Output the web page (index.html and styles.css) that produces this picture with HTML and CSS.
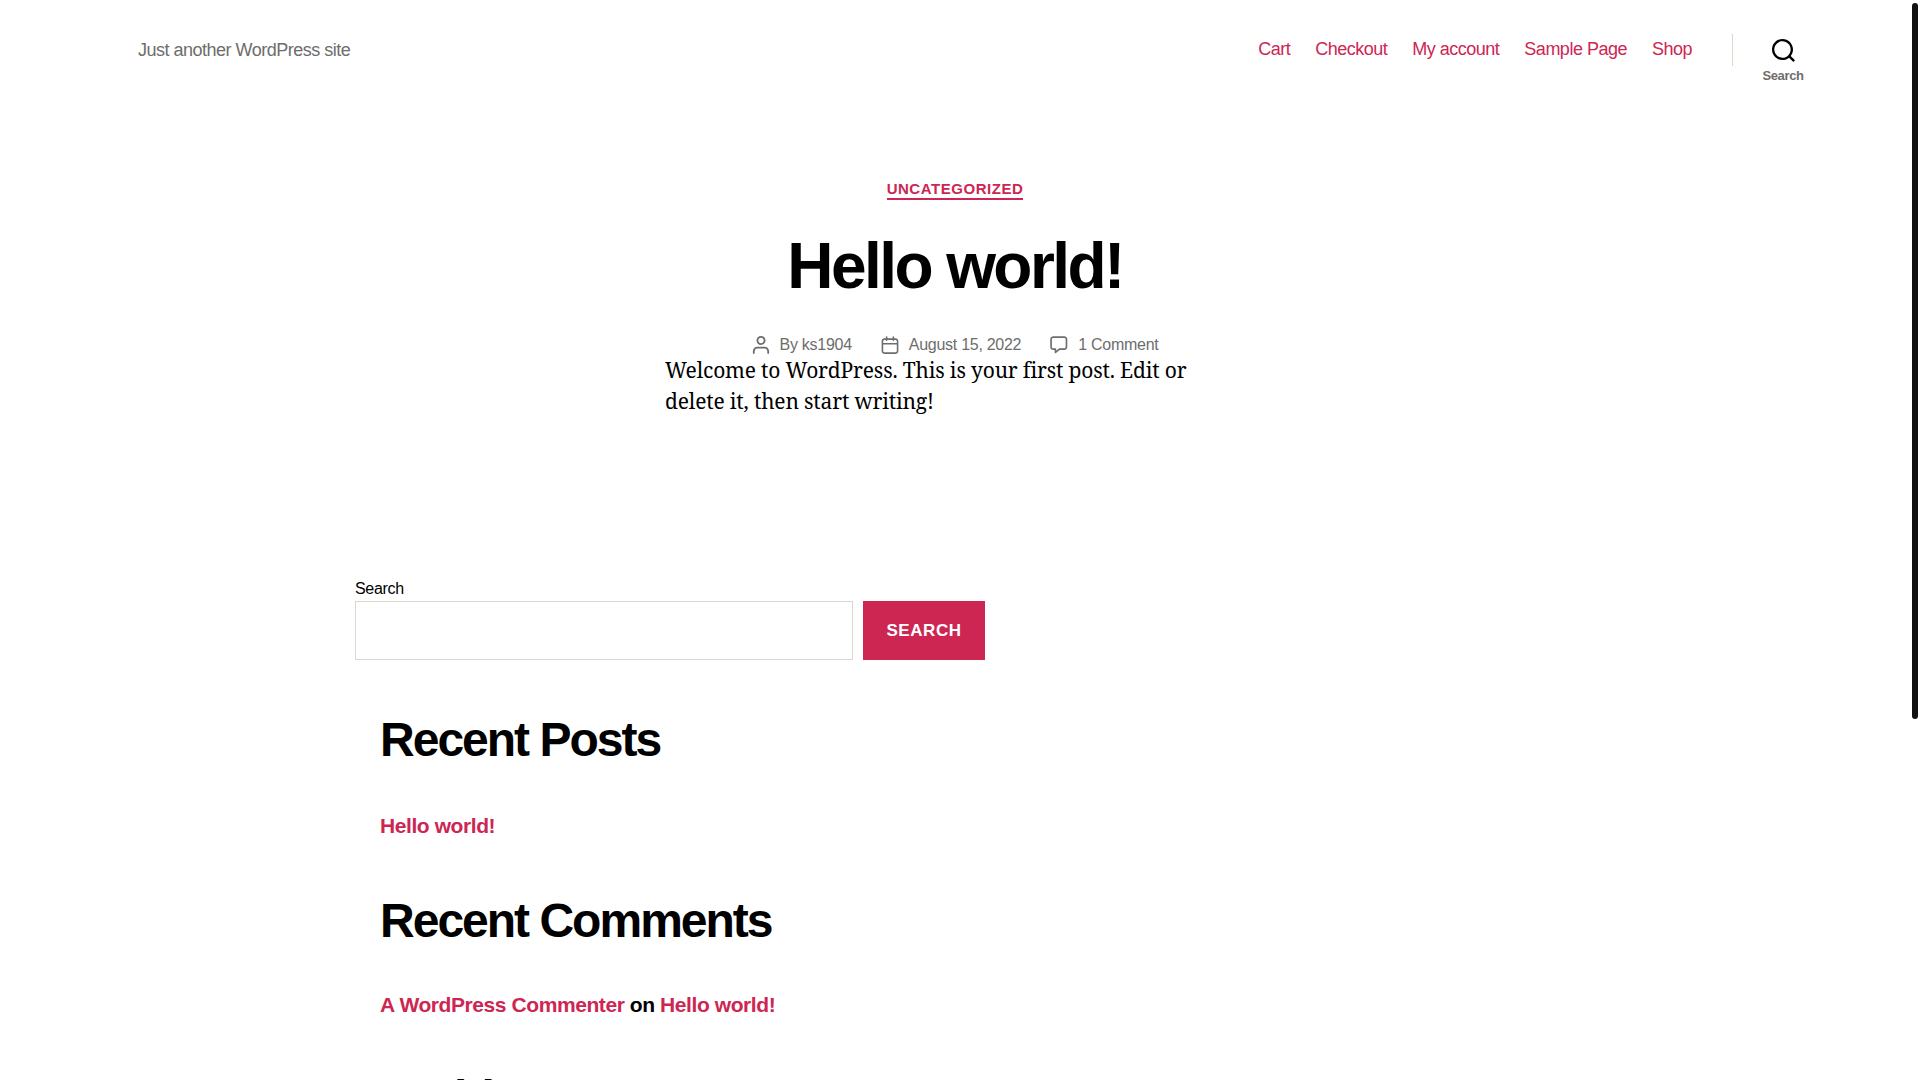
FILE: index.html
```html
<!DOCTYPE html>
<html lang="en">
<head>
<meta charset="utf-8">
<title>Just another WordPress site</title>
<link rel="stylesheet" href="styles.css">
</head>
<body>
<div class="page">
  <header class="site-header">
    <p class="tagline">Just another WordPress site</p>
    <div class="header-right">
      <nav class="primary-nav">
        <a href="#">Cart</a>
        <a href="#">Checkout</a>
        <a href="#">My account</a>
        <a href="#">Sample Page</a>
        <a href="#">Shop</a>
      </nav>
      <button class="search-toggle" type="button">
        <svg class="search-icon" viewBox="0 0 23 23" aria-hidden="true"><path d="M38.710696,48.0601792 L43,52.3494831 L41.3494831,54 L37.0601792,49.710696 C35.2632422,51.1481185 32.9839107,52.0076499 30.5038249,52.0076499 C24.7027226,52.0076499 20,47.3049272 20,41.5038249 C20,35.7027226 24.7027226,31 30.5038249,31 C36.3049272,31 41.0076499,35.7027226 41.0076499,41.5038249 C41.0076499,43.9839107 40.1481185,46.2632422 38.710696,48.0601792 Z M36.3875844,47.1716785 C37.8030221,45.7026647 38.6734666,43.7048964 38.6734666,41.5038249 C38.6734666,36.9918565 35.0157934,33.3341833 30.5038249,33.3341833 C25.9918565,33.3341833 22.3341833,36.9918565 22.3341833,41.5038249 C22.3341833,46.0157934 25.9918565,49.6734666 30.5038249,49.6734666 C32.7048964,49.6734666 34.7026647,48.8030221 36.1716785,47.3875844 C36.2023931,47.347638 36.2360451,47.3092237 36.2726343,47.2726343 C36.3092237,47.2360451 36.347638,47.2023931 36.3875844,47.1716785 Z" transform="translate(-20 -31)"/></svg>
        <span class="toggle-label">Search</span>
      </button>
    </div>
  </header>

  <main class="site-main">
    <article class="post">
      <div class="entry-cat"><a href="#">Uncategorized</a></div>
      <h1 class="entry-title">Hello world!</h1>
      <ul class="post-meta">
        <li>
          <svg class="meta-icon" viewBox="0 0 18 20" aria-hidden="true"><path d="M18,19 C18,19.5522847 17.5522847,20 17,20 C16.4477153,20 16,19.5522847 16,19 L16,17 C16,15.3431458 14.6568542,14 13,14 L5,14 C3.34314575,14 2,15.3431458 2,17 L2,19 C2,19.5522847 1.55228475,20 1,20 C0.44771525,20 0,19.5522847 0,19 L0,17 C0,14.2385763 2.23857625,12 5,12 L13,12 C15.7614237,12 18,14.2385763 18,17 L18,19 Z M9,10 C6.23857625,10 4,7.76142375 4,5 C4,2.23857625 6.23857625,0 9,0 C11.7614237,0 14,2.23857625 14,5 C14,7.76142375 11.7614237,10 9,10 Z M9,8 C10.6568542,8 12,6.65685425 12,5 C12,3.34314575 10.6568542,2 9,2 C7.34314575,2 6,3.34314575 6,5 C6,6.65685425 7.34314575,8 9,8 Z"/></svg>
          <span>By <a href="#">ks1904</a></span>
        </li>
        <li>
          <svg class="meta-icon" viewBox="0 0 18 19" aria-hidden="true"><path d="M4.60069444,4.09375 L3.25,4.09375 C2.47334957,4.09375 1.84375,4.72334957 1.84375,5.5 L1.84375,7.26736111 L16.15625,7.26736111 L16.15625,5.5 C16.15625,4.72334957 15.5266504,4.09375 14.75,4.09375 L13.3993056,4.09375 L13.3993056,4.55555556 C13.3993056,5.02154581 13.0215458,5.39930556 12.5555556,5.39930556 C12.0895653,5.39930556 11.7118056,5.02154581 11.7118056,4.55555556 L11.7118056,4.09375 L6.28819444,4.09375 L6.28819444,4.55555556 C6.28819444,5.02154581 5.9104347,5.39930556 5.44444444,5.39930556 C4.97845419,5.39930556 4.60069444,5.02154581 4.60069444,4.55555556 L4.60069444,4.09375 Z M6.28819444,2.40625 L11.7118056,2.40625 L11.7118056,1 C11.7118056,0.534009742 12.0895653,0.15625 12.5555556,0.15625 C13.0215458,0.15625 13.3993056,0.534009742 13.3993056,1 L13.3993056,2.40625 L14.75,2.40625 C16.4586309,2.40625 17.84375,3.79136906 17.84375,5.5 L17.84375,15.875 C17.84375,17.5836309 16.4586309,18.96875 14.75,18.96875 L3.25,18.96875 C1.54136906,18.96875 0.15625,17.5836309 0.15625,15.875 L0.15625,5.5 C0.15625,3.79136906 1.54136906,2.40625 3.25,2.40625 L4.60069444,2.40625 L4.60069444,1 C4.60069444,0.534009742 4.97845419,0.15625 5.44444444,0.15625 C5.9104347,0.15625 6.28819444,0.534009742 6.28819444,1 L6.28819444,2.40625 Z M1.84375,8.95486111 L1.84375,15.875 C1.84375,16.6516504 2.47334957,17.28125 3.25,17.28125 L14.75,17.28125 C15.5266504,17.28125 16.15625,16.6516504 16.15625,15.875 L16.15625,8.95486111 L1.84375,8.95486111 Z"/></svg>
          <a href="#">August 15, 2022</a>
        </li>
        <li>
          <svg class="meta-icon" viewBox="0 0 19 19" aria-hidden="true"><path d="M9.43016863,13.2235931 C9.58624731,13.094699 9.7823475,13.0241935 9.98476849,13.0241935 L15.0564516,13.0241935 C15.8581553,13.0241935 16.5080645,12.3742843 16.5080645,11.5725806 L16.5080645,3.44354839 C16.5080645,2.64184472 15.8581553,1.99193548 15.0564516,1.99193548 L3.44354839,1.99193548 C2.64184472,1.99193548 1.99193548,2.64184472 1.99193548,3.44354839 L1.99193548,11.5725806 C1.99193548,12.3742843 2.64184472,13.0241935 3.44354839,13.0241935 L5.76612903,13.0241935 C6.24715123,13.0241935 6.63709677,13.4141391 6.63709677,13.8951613 L6.63709677,15.5301903 L9.43016863,13.2235931 Z M3.44354839,14.766129 C1.67980032,14.766129 0.25,13.3363287 0.25,11.5725806 L0.25,3.44354839 C0.25,1.67980032 1.67980032,0.25 3.44354839,0.25 L15.0564516,0.25 C16.8201997,0.25 18.25,1.67980032 18.25,3.44354839 L18.25,11.5725806 C18.25,13.3363287 16.8201997,14.766129 15.0564516,14.766129 L10.2979143,14.766129 L6.32072889,18.0506004 C5.75274472,18.5196577 4.89516129,18.1156602 4.89516129,17.3790323 L4.89516129,14.766129 L3.44354839,14.766129 Z"/></svg>
          <a href="#">1 Comment</a>
        </li>
      </ul>
      <div class="entry-content">
        <p>Welcome to WordPress. This is your first post. Edit or delete it, then start writing!</p>
      </div>
    </article>

    <section class="widgets">
      <form class="search-widget">
        <label class="search-label" for="s">Search</label>
        <div class="search-row">
          <input class="search-input" id="s" type="search">
          <button class="search-submit" type="button">Search</button>
        </div>
      </form>
      <div class="widget">
        <h2 class="widget-title">Recent Posts</h2>
        <p class="widget-line"><a href="#">Hello world!</a></p>
      </div>
      <div class="widget">
        <h2 class="widget-title">Recent Comments</h2>
        <p class="widget-line widget-line-tight"><a href="#">A WordPress Commenter</a> on <a href="#">Hello world!</a></p>
      </div>
      <div class="widget">
        <h2 class="widget-title widget-title-tight">Archives</h2>
      </div>
    </section>
  </main>
</div>
<div class="scroll-thumb"></div>
</body>
</html>
```

FILE: styles.css
```css
html, body {
  margin: 0;
  height: 100%;
  overflow: hidden;
  background: #fff;
}
body {
  font-family: "Liberation Sans", Arial, sans-serif;
  color: #000;
}
a { color: #cd2653; text-decoration: none; }
.page { width: 1910px; }

.site-header {
  display: flex;
  justify-content: space-between;
  padding: 0 76px 0 138px;
  height: 100px;
}
.tagline {
  margin: 0;
  padding-top: 40px;
  font-size: 18px;
  line-height: 21px;
  letter-spacing: -0.0277em;
  color: #6d6d6d;
}
.header-right { display: flex; }
.primary-nav {
  display: flex;
  gap: 25px;
  padding-top: 39px;
  font-size: 18px;
  line-height: 21px;
  letter-spacing: -0.0277em;
}
.search-toggle {
  position: relative;
  display: flex;
  flex-direction: column;
  align-items: center;
  width: 102px;
  height: 100px;
  margin-left: 40px;
  padding: 39px 0 0;
  border: 0;
  background: none;
  font: inherit;
}
.search-toggle::before {
  content: "";
  position: absolute;
  left: 0;
  top: 34px;
  height: 32px;
  width: 1px;
  background: #dcd7ca;
}
.search-icon { width: 23px; height: 23px; fill: #000; }
.toggle-label {
  margin-top: 6px;
  font-size: 13px;
  line-height: 15px;
  font-weight: 700;
  color: #6d6d6d;
  letter-spacing: -0.0277em;
}

.post { text-align: center; }
.entry-cat {
  padding-top: 79px;
  font-size: 15px;
  line-height: 20px;
  font-weight: 700;
  letter-spacing: 0.036em;
  text-transform: uppercase;
}
.entry-cat a { border-bottom: 2px solid #cd2653; padding-bottom: 1px; }
.entry-title {
  margin: 0;
  padding-top: 27px;
  font-size: 64px;
  line-height: 80px;
  font-weight: 700;
  letter-spacing: -0.04em;
}
.post-meta {
  display: flex;
  justify-content: center;
  gap: 29px;
  margin: 0;
  padding: 29px 0 0;
  list-style: none;
  font-size: 16px;
  line-height: 20px;
  letter-spacing: -0.017em;
  color: #6d6d6d;
}
.post-meta li { display: flex; align-items: center; gap: 10px; }
.post-meta a { color: #6d6d6d; }
.meta-icon { width: 18px; height: 18px; fill: #6d6d6d; }
.entry-content {
  width: 580px;
  margin: 0 auto;
  text-align: left;
  font-family: "Noto Serif", "DejaVu Serif", serif;
  font-size: 21px;
  line-height: 31px;
  letter-spacing: -0.008em;
}
.entry-content p { margin: 0; }

.widgets { width: 1200px; margin: 162px auto 0; }
.search-label {
  display: block;
  font-size: 16px;
  line-height: 20px;
  letter-spacing: -0.02em;
}
.search-row { display: flex; gap: 10px; margin-top: 2px; }
.search-input {
  box-sizing: border-box;
  width: 498px;
  height: 59px;
  border: 1px solid #dcd7ca;
  background: #fff;
  margin: 0;
}
.search-submit {
  width: 122px;
  height: 59px;
  border: 0;
  padding: 0;
  background: #cd2653;
  color: #fff;
  font-family: inherit;
  font-size: 17px;
  font-weight: 700;
  letter-spacing: 0.0333em;
  text-transform: uppercase;
}
.widget { padding-left: 25px; }
.widget-title {
  margin: 0;
  padding-top: 50px;
  font-size: 48px;
  line-height: 60px;
  font-weight: 700;
  letter-spacing: -0.0415em;
}
.widget-title-tight { padding-top: 48px; }
.widget-line {
  margin: 0;
  padding-top: 41px;
  font-size: 21px;
  line-height: 30px;
  font-weight: 700;
  letter-spacing: -0.02em;
}
.widget-line-tight { padding-top: 39px; }
.scroll-thumb {
  position: absolute;
  top: 3px;
  right: 2px;
  width: 6px;
  height: 716px;
  border-radius: 3px;
  background: #111;
}
```
